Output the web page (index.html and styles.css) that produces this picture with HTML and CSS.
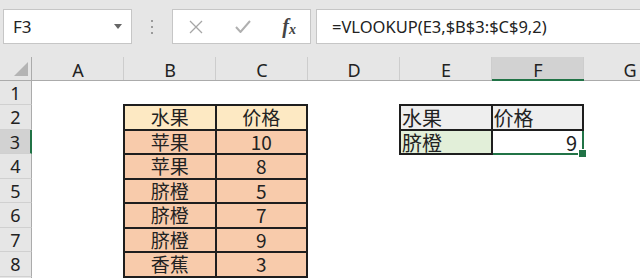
FILE: index.html
```html
<!DOCTYPE html>
<html lang="zh-CN">
<head>
    <meta charset="UTF-8" />
    <title>VLOOKUP</title>
    <link rel="stylesheet" href="styles.css">
</head>
<body>
    <div class="toolbar">
        <div class="namebox">
            <span>F3</span>
            <svg class="caret" width="8" height="5" viewBox="0 0 8 5"><path d="M0 0h8L4 5z" fill="#666"/></svg>
        </div>
        <div class="grip"><i></i><i></i><i></i></div>
        <div class="fxbtns">
            <svg width="14" height="14" viewBox="0 0 14 14"><path d="M1 1L13 13M13 1L1 13" stroke="#a6a6a6" stroke-width="1.3" fill="none"/></svg>
            <svg width="16" height="13" viewBox="0 0 16 13"><path d="M1 7l4.5 5L15 1" stroke="#b0b0b0" stroke-width="2" fill="none"/></svg>
            <span class="fx">f<sub>x</sub></span>
        </div>
        <div class="formula">=VLOOKUP(E3,$B$3:$C$9,2)</div>
    </div>

    <div class="sheet">
        <div class="corner"><svg width="14" height="14" viewBox="0 0 14 14"><path d="M14 0V14H0z" fill="#b4b4b4"/></svg></div>
        <div class="colhead">A</div>
        <div class="colhead">B</div>
        <div class="colhead">C</div>
        <div class="colhead">D</div>
        <div class="colhead">E</div>
        <div class="colhead active">F</div>
        <div class="colhead">G</div>

        <div class="rowhead r1">1</div>
        <div class="rowhead r2">2</div>
        <div class="rowhead r3 active">3</div>
        <div class="rowhead r4">4</div>
        <div class="rowhead r5">5</div>
        <div class="rowhead r6">6</div>
        <div class="rowhead r7">7</div>
        <div class="rowhead r8">8</div>
        <div class="rowhead r9"></div>

        <table class="data">
            <tr class="head"><td>水果</td><td>价格</td></tr>
            <tr><td>苹果</td><td>10</td></tr>
            <tr><td>苹果</td><td>8</td></tr>
            <tr><td>脐橙</td><td>5</td></tr>
            <tr><td>脐橙</td><td>7</td></tr>
            <tr><td>脐橙</td><td>9</td></tr>
            <tr><td>香蕉</td><td>3</td></tr>
            <tr><td></td><td></td></tr>
        </table>

        <table class="lookup">
            <tr class="head"><td>水果</td><td>价格</td></tr>
            <tr><td class="key">脐橙</td><td class="result">9<span class="handle"></span></td></tr>
        </table>
    </div>
</body>
</html>
```

FILE: styles.css
```css
body {
    margin: 0;
    width: 640px;
    height: 278px;
    overflow: hidden;
    background: #ffffff;
    font-family: "Noto Sans", "Liberation Sans", sans-serif;
    color: #222;
}

.toolbar {
    display: flex;
    height: 57px;
    padding-top: 9px;
    box-sizing: border-box;
    background: #e6e6e6;
}
.namebox {
    display: flex;
    align-items: center;
    justify-content: space-between;
    box-sizing: border-box;
    width: 129px;
    height: 35px;
    margin-left: 3px;
    padding: 0 9px 0 9px;
    background: #fff;
    border: 1px solid #c6c6c6;
    font-size: 17px;
}
.grip {
    width: 40px;
    height: 35px;
    display: flex;
    flex-direction: column;
    align-items: center;
    justify-content: center;
    gap: 4px;
}
.grip i {
    width: 2px;
    height: 2px;
    background: #9a9a9a;
}
.fxbtns {
    display: flex;
    align-items: center;
    justify-content: space-between;
    box-sizing: border-box;
    width: 139px;
    height: 35px;
    padding: 0 14px 0 16px;
    background: #fff;
    border: 1px solid #c6c6c6;
}
.fx {
    font-family: "Liberation Serif", serif;
    font-style: italic;
    font-weight: bold;
    font-size: 20px;
    color: #444;
    line-height: 1;
}
.fx sub {
    font-size: 14px;
    vertical-align: -1px;
}
.formula {
    flex: 1;
    height: 35px;
    box-sizing: border-box;
    margin-left: 5px;
    padding-left: 15px;
    line-height: 33px;
    background: #fff;
    border: 1px solid #c6c6c6;
    border-right: none;
    font-size: 16.5px;
    color: #222;
    white-space: nowrap;
}

.sheet {
    display: grid;
    grid-template-columns: 32px repeat(7, 92px);
    grid-template-rows: 24px 24px repeat(8, 24.5px);
    height: 221px;
    overflow: hidden;
}
.corner {
    background: #e6e6e6;
    border-right: 1px solid #ababab;
    border-bottom: 1px solid #ababab;
    display: flex;
    align-items: flex-end;
    justify-content: flex-end;
    padding: 0 3px 4px 0;
}
.colhead {
    background: #e6e6e6;
    border-bottom: 1px solid #ababab;
    box-shadow: inset -1px 0 0 #cdcdcd;
    text-align: center;
    font-size: 18px;
    line-height: 26px;
    color: #222;
}
.colhead.active {
    background: #d2d2d2;
    border-bottom: 2px solid #217346;
}
.rowhead {
    grid-column: 1;
    background: #e6e6e6;
    border-right: 1px solid #ababab;
    border-bottom: 1px solid #d0d0d0;
    text-align: center;
    font-size: 18px;
    line-height: 25px;
    color: #222;
}
.rowhead.active {
    background: #d2d2d2;
    border-right: 2px solid #217346;
}
.r1 { grid-row: 2; }
.r2 { grid-row: 3; }
.r3 { grid-row: 4; }
.r4 { grid-row: 5; }
.r5 { grid-row: 6; }
.r6 { grid-row: 7; }
.r7 { grid-row: 8; }
.r8 { grid-row: 9; }
.r9 { grid-row: 10; }

table {
    border-collapse: collapse;
    table-layout: fixed;
    font-family: "Noto Sans CJK SC", sans-serif;
    color: #222;
}
td {
    border: 2px solid #1e1e1e;
    padding: 0;
    height: 24.5px;
    width: 92px;
    box-sizing: border-box;
    font-size: 19px;
    line-height: 20px;
    vertical-align: middle;
    white-space: nowrap;
}

.data {
    grid-column: 3 / 5;
    grid-row: 3 / 11;
    margin: -1px 0 0 -1px;
    align-self: start;
}
.data td {
    text-align: center;
    background: #f8cbab;
}
.data .head td {
    background: #fde9c3;
}

.lookup {
    grid-column: 6 / 8;
    grid-row: 3 / 5;
    margin: -1px 0 0 -1px;
    align-self: start;
}
.lookup td {
    padding-left: 1px;
    font-size: 20px;
    padding-top: 2px;
}
.lookup .head td {
    background: #eeeeee;
}
.lookup .key {
    background: #e2efd9;
}
.lookup .result {
    position: relative;
    background: #fff;
    text-align: right;
    padding-right: 5px;
    border: 2px solid #217346;
}
.handle {
    position: absolute;
    right: -5px;
    bottom: -5px;
    width: 7px;
    height: 7px;
    background: #217346;
    border: 1px solid #fff;
}
```
